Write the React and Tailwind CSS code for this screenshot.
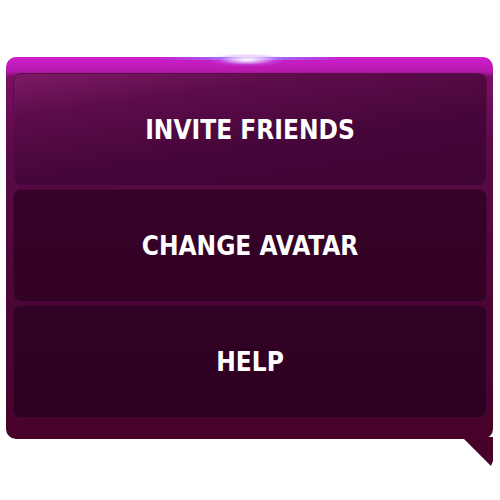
export default function App() {
  const items = ["INVITE FRIENDS", "CHANGE AVATAR", "HELP"];

  return (
    <div className="w-[500px] h-[500px] bg-white pt-[57px] pl-[6px]">
      <div className="relative w-[487px] h-[382px] rounded-[10px] bg-[linear-gradient(180deg,#cc1ecc_0px,#b81ab0_14px,#7a1064_20px,#5a0a48_90px,#4c0634_250px,#48022a_382px)] pt-[16px] pl-[7px] pr-[6px] pb-[21px] flex flex-col gap-[3px]">
        {/* glow at top centre */}
        <div className="absolute left-[150px] top-[0px] w-[190px] h-[3px] bg-[linear-gradient(90deg,rgba(140,120,255,0)_0%,rgba(150,120,255,0.8)_35%,rgba(230,220,255,0.9)_50%,rgba(150,120,255,0.8)_65%,rgba(140,120,255,0)_100%)] pointer-events-none" />
        <div className="absolute left-[206px] top-[-3px] w-[70px] h-[12px] rounded-full bg-[radial-gradient(ellipse_at_center,rgba(255,255,255,1)_0%,rgba(230,210,255,0.8)_25%,rgba(200,120,255,0.3)_55%,rgba(200,80,230,0)_80%)] pointer-events-none" />

        {/* tail */}
        <svg className="absolute left-[456px] top-[380px]" width="31" height="30" viewBox="0 0 31 30">
          <path d="M0 0 L31 0 L31 24 L29 29 Z" fill="#48022a" />
        </svg>

        {items.map((label, i) => (
          <div
            key={label}
            className={
              i === 0
                ? "flex-1 flex items-center justify-center rounded-[8px] border border-[#5a0a46] bg-[linear-gradient(172deg,#7e1a68_0%,#5c0c4a_25%,#46063a_60%,#3e0432_100%)]"
                : i === 1
                ? "flex-1 flex items-center justify-center rounded-[8px] border border-[#480638] bg-[linear-gradient(180deg,#36022a_0%,#320124_100%)]"
                : "flex-1 flex items-center justify-center rounded-[8px] border border-[#420534] bg-[linear-gradient(180deg,#320126_0%,#2d001f_100%)]"
            }
          >
            <span className="text-white text-[26px] font-bold leading-none font-['DejaVu_Sans_Condensed','DejaVu_Sans',sans-serif] [font-stretch:condensed]">
              {label}
            </span>
          </div>
        ))}
      </div>
    </div>
  );
}
